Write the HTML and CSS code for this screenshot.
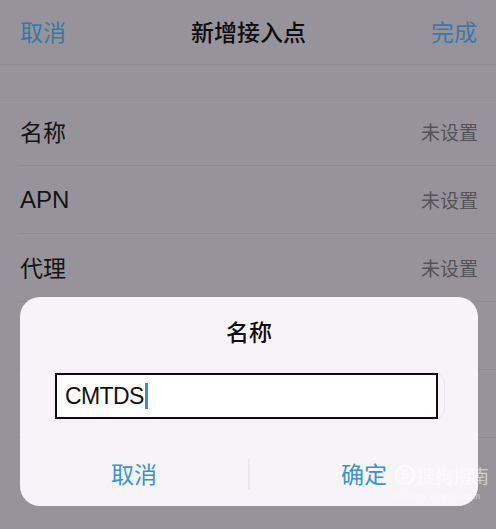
FILE: index.html
```html
<!DOCTYPE html>
<html lang="zh">
<head>
<meta charset="utf-8">
<link rel="stylesheet" href="styles.css">
</head>
<body>
<div class="screen">
  <header class="nav">
    <span class="nav-btn">取消</span>
    <span class="nav-title">新增接入点</span>
    <span class="nav-btn">完成</span>
  </header>
  <div class="gap"></div>
  <ul class="list">
    <li class="row"><span class="label">名称</span><span class="value">未设置</span></li>
    <li class="row"><span class="label latin">APN</span><span class="value">未设置</span></li>
    <li class="row"><span class="label">代理</span><span class="value">未设置</span></li>
    <li class="row"><span class="label"></span><span class="value"></span></li>
    <li class="row"><span class="label"></span><span class="value"></span></li>
  </ul>

  <div class="dialog">
    <div class="dialog-title">名称</div>
    <div class="field-wrap">
      <div class="field"><span class="field-text">CMTDS</span><span class="caret"></span></div>
      <div class="ghost"></div>
    </div>
    <div class="actions">
      <span class="action">取消</span>
      <span class="divider"></span>
      <span class="action">确定</span>
    </div>
  </div>

  <div class="watermark">
    <div class="wm-main"><span class="wm-s">S</span>搜狗指南</div>
    <div class="wm-url">zhinan.sogou.com</div>
  </div>
</div>
</body>
</html>
```
FILE: styles.css
```css
* { box-sizing: border-box; margin: 0; padding: 0; }
html, body { width: 496px; height: 529px; overflow: hidden; }
body {
  background: #97939a;
  font-family: "Noto Sans CJK SC", "Noto Sans", sans-serif;
}
.screen { position: relative; width: 496px; height: 529px; }
.nav {
  height: 65px;
  display: flex;
  align-items: center;
  justify-content: space-between;
  padding: 0 19px 0 20px;
  border-bottom: 1px solid #8d8a90;
}
.nav-btn { font-size: 23px; color: #3b78a9; line-height: 1; padding-bottom: 2px; }
.nav-title { font-size: 23px; color: #0d0d0f; line-height: 1; padding-bottom: 2px; font-weight: 500; }
.gap { height: 33px; border-bottom: 1px solid #928e95; }
.list { list-style: none; }
.row {
  height: 68px;
  margin-left: 18px;
  padding-right: 18px;
  display: flex;
  align-items: center;
  justify-content: space-between;
  border-bottom: 1px solid #8c8990;
}
.label { font-size: 23px; color: #141315; margin-left: 2px; line-height: 1; }
.label.latin { font-family: "Liberation Sans", "Noto Sans", sans-serif; font-size: 24px; }
.value { font-size: 19px; color: #555358; line-height: 1; }

.dialog {
  position: absolute;
  left: 20px;
  top: 297px;
  width: 458px;
  height: 209px;
  background: #f7f4f8;
  border-radius: 20px;
  display: flex;
  flex-direction: column;
}
.dialog-title {
  text-align: center;
  font-size: 23px;
  color: #0e0e10;
  line-height: 1;
  margin-top: 23px;
  font-weight: 500;
}
.field-wrap { position: relative; margin: 30px 0 0 35px; height: 46px; }
.ghost {
  position: absolute;
  left: 0; top: 0;
  width: 390px; height: 46px;
  border-radius: 10px;
  border: 1px solid #eae7ec;
}
.field {
  position: relative;
  z-index: 1;
  width: 383px;
  height: 46px;
  border: 2px solid #0b0b0b;
  background: #ffffff;
  display: flex;
  align-items: center;
  padding-left: 8px;
}
.field-text {
  font-family: "Liberation Sans", "Noto Sans", sans-serif;
  font-size: 23px;
  color: #111;
  letter-spacing: -0.6px;
}
.caret { width: 3px; height: 26px; background: #3d8fd0; margin-left: 1px; }
.actions {
  flex: 1;
  display: flex;
  align-items: center;
  padding-top: 22px;
}
.action {
  flex: 1;
  text-align: center;
  font-size: 23px;
  color: #3a93cf;
  line-height: 1;
}
.divider { width: 2px; height: 30px; background: #ebe8ed; }

.watermark {
  position: absolute;
  left: 395px;
  top: 463px;
  color: rgba(255,255,255,0.55);
}
.wm-main { font-size: 18px; line-height: 24px; display: flex; align-items: center; }
.wm-s {
  display: inline-flex; align-items: center; justify-content: center;
  width: 20px; height: 20px; border-radius: 50%;
  border: 2px solid rgba(255,255,255,0.55);
  font-family: "Liberation Sans", sans-serif; font-weight: bold; font-size: 13px;
  margin-right: 2px;
}
.wm-url { font-family: "Liberation Sans", sans-serif; font-size: 9px; letter-spacing: 0.8px; margin-top: 4px; }
```
